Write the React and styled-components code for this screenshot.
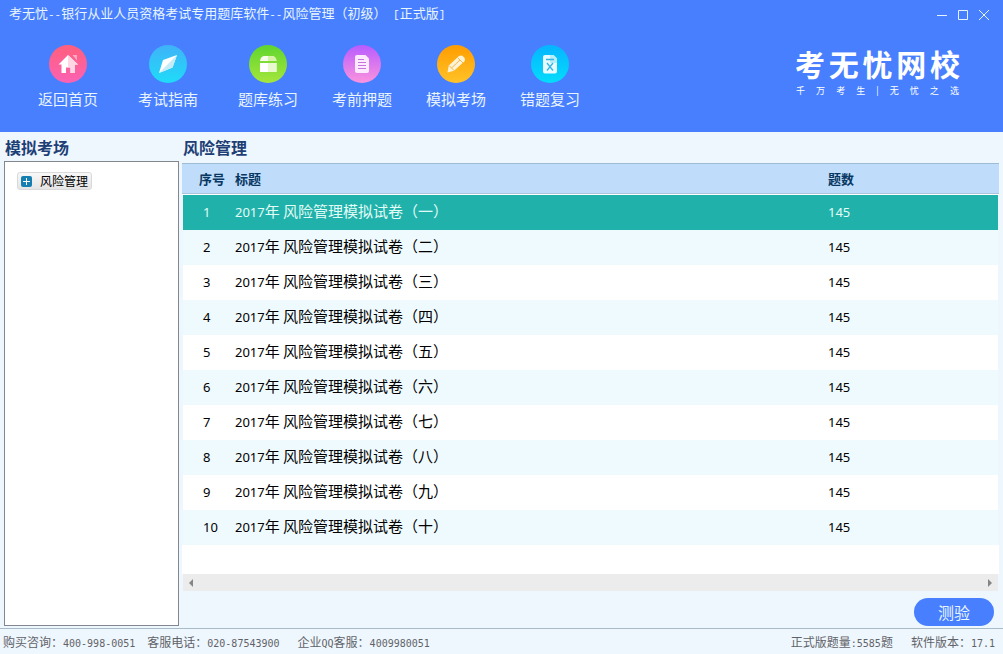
import React, { useState } from "react";
import styled, { createGlobalStyle } from "styled-components";

const navItems = [
  { key: "home", label: "返回首页", gap: 40 },
  { key: "guide", label: "考试指南", gap: 40 },
  { key: "bank", label: "题库练习", gap: 34 },
  { key: "predict", label: "考前押题", gap: 34 },
  { key: "mock", label: "模拟考场", gap: 34 },
  { key: "wrong", label: "错题复习", gap: 0 },
];

const papers = ["一", "二", "三", "四", "五", "六", "七", "八", "九", "十"].map(
  (num, index) => ({
    id: index + 1,
    year: "2017",
    name: `年 风险管理模拟试卷（${num}）`,
    count: 145,
  })
);

const brand = ["考", "无", "忧", "网", "校"];
const slogan = ["千", "万", "考", "生", "|", "无", "忧", "之", "选"];

const gradients = {
  home: ["#ff5f7c", "#fb62b4"],
  guide: ["#3fb2f8", "#1fdcf8"],
  bank: ["#5fd52f", "#a6e63c"],
  predict: ["#b75cff", "#fb93de"],
  mock: ["#ff9c00", "#ffc328"],
  wrong: ["#06b4ff", "#04dcfb"],
};

const shapes = {
  home: (
    <>
      <path d="M23.500 10H28v5.500z" fill="#ffa9c3" />
      <path d="M19 10L9.500 19.500h3V28H17v-5.500h4.500V28H26v-8.500h3z" fill="#fff" />
      <path d="M19 10v12.500h2.500V28H26v-8.500h3z" fill="#ffd6e3" />
    </>
  ),
  guide: (
    <>
      <path d="M28 10L14 15 10 28l13.500-5.500z" fill="#fff" />
      <path d="M28 10l-4.500 12.500L10 28z" fill="#c4ecf8" />
    </>
  ),
  bank: (
    <>
      <path d="M14.500 11h9.500q3 1 3.500 5H11q.5-4 3.500-5z" fill="#f6fdea" />
      <path d="M19 11h5q3 1 3.500 5H19z" fill="#d6f3a8" />
      <path d="M11 18h16.500v9H11z" fill="#fff" />
      <path d="M19 18h8.500v9H19z" fill="#e9f8cf" />
    </>
  ),
  predict: (
    <>
      <path d="M14 10h8.500l3.500 3.500V26q0 2-2 2H14q-2 0-2-2V12q0-2 2-2z" fill="#fdeaff" />
      <path d="M15 14.500h6M15 17.500h8M15 20.500h8M15 23.500h8" stroke="#c673dc" strokeWidth="1" />
    </>
  ),
  mock: (
    <>
      <path
        d="M10.500 27.500l1.300-7L21.500 11.500q2.500-2 5 .3t.8 4.700L17 25.800z"
        fill="#fff3d6"
      />
      <path d="M12 20.500l5 5M20.500 12.500l5.500 5.500M14.500 23l8.500-8" stroke="#f0b65a" strokeWidth="1" fill="none" />
    </>
  ),
  wrong: (
    <>
      <path d="M14 10h8.500l3.500 3.500V26.500q0 2-2 2H14q-2 0-2-2V12q0-2 2-2z" fill="#e7fbff" />
      <path d="M19 10h3.500l3.500 3.500V18h-7z" fill="#b5edfb" />
      <path d="M15 14.500h8M16 18l6 7.500M22 18l-6 7.500" stroke="#35b5e3" strokeWidth="1.300" fill="none" />
    </>
  ),
};

const NavIcon = ({ name }) => (
  <svg width="38" height="38" viewBox="0 0 38 38" aria-hidden="true">
    <defs>
      <linearGradient id={`nav-${name}`} x1="0" y1="0" x2="0" y2="1">
        <stop offset="0" stopColor={gradients[name][0]} />
        <stop offset="1" stopColor={gradients[name][1]} />
      </linearGradient>
    </defs>
    <circle cx="19" cy="19" r="19" fill={`url(#nav-${name})`} />
    {shapes[name]}
  </svg>
);

const App = () => {
  const [selected, setSelected] = useState(1);

  return (
    <>
      <GlobalStyle />
      <Page>
        <Header>
          <TitleBar>
            <Title>
              考无忧<Dash>--</Dash>银行从业人员资格考试专用题库软件
              <Dash>--</Dash>风险管理（初级）<Dash> [</Dash>正式版<Dash>]</Dash>
            </Title>
            <WindowButtons>
              <WindowButton aria-label="最小化">
                <svg width="12" height="12">
                  <path d="M1 6.500h10" stroke="#e4f4ff" />
                </svg>
              </WindowButton>
              <WindowButton aria-label="最大化">
                <svg width="12" height="12">
                  <path d="M1.500 1.500h9v9h-9z" stroke="#e4f4ff" fill="none" />
                </svg>
              </WindowButton>
              <WindowButton aria-label="关闭">
                <svg width="12" height="12">
                  <path d="M1 1l10 10M11 1L1 11" stroke="#e4f4ff" />
                </svg>
              </WindowButton>
            </WindowButtons>
          </TitleBar>
          <HeaderBody>
            <Nav>
              {navItems.map((item) => (
                <NavButton key={item.key} $gap={item.gap}>
                  <NavIcon name={item.key} />
                  <span>{item.label}</span>
                </NavButton>
              ))}
            </Nav>
            <Brand>
              <BrandName>
                {brand.map((char) => (
                  <span key={char}>{char}</span>
                ))}
              </BrandName>
              <Slogan>
                {slogan.map((char) => (
                  <span key={char}>{char}</span>
                ))}
              </Slogan>
            </Brand>
          </HeaderBody>
        </Header>

        <Main>
          <Sidebar>
            <PanelTitle>模拟考场</PanelTitle>
            <Tree>
              <TreeButton>
                <svg width="11" height="11" aria-hidden="true">
                  <rect width="11" height="11" rx="2" fill="#147fb0" />
                  <path d="M2 5.500h7M5.500 2v7" stroke="#fff" />
                </svg>
                风险管理
              </TreeButton>
            </Tree>
          </Sidebar>

          <Content>
            <PanelTitle>风险管理</PanelTitle>
            <TableWrap>
              <Table>
                <thead>
                  <tr>
                    <HeadCell $width="53px" $left={17}>
                      序号
                    </HeadCell>
                    <HeadCell>标题</HeadCell>
                    <HeadCell $width="171px">题数</HeadCell>
                  </tr>
                </thead>
                <tbody>
                  {papers.map((paper) => (
                    <TableRow
                      key={paper.id}
                      $active={paper.id === selected}
                      onClick={() => setSelected(paper.id)}
                    >
                      <Cell $left={20}>
                        <Digits>{paper.id}</Digits>
                      </Cell>
                      <Cell>
                        <Digits>{paper.year}</Digits>
                        {paper.name}
                      </Cell>
                      <Cell>
                        <Digits>{paper.count}</Digits>
                      </Cell>
                    </TableRow>
                  ))}
                </tbody>
              </Table>
            </TableWrap>
            <ScrollTrack>
              <ScrollButton aria-label="向左滚动">
                <svg width="6" height="8">
                  <path d="M5 0v8L1 4z" fill="#858585" />
                </svg>
              </ScrollButton>
              <ScrollButton aria-label="向右滚动">
                <svg width="6" height="8">
                  <path d="M1 0v8l4-4z" fill="#858585" />
                </svg>
              </ScrollButton>
            </ScrollTrack>
            <Actions>
              <TestButton>测验</TestButton>
            </Actions>
          </Content>
        </Main>

        <Footer>
          <FooterGroup $gap={12}>
            <span>
              购买咨询：<Mono>400-998-0051</Mono>
            </span>
            <span>
              客服电话：<Mono>020-87543900</Mono>
            </span>
          </FooterGroup>
          <FooterQQ>
            企业<Mono>QQ</Mono>客服：<Mono>4009980051</Mono>
          </FooterQQ>
          <FooterGroup $gap={18}>
            <span>
              正式版题量<Mono>:5585</Mono>题
            </span>
            <span>
              软件版本：<Mono>17.1</Mono>
            </span>
          </FooterGroup>
        </Footer>
      </Page>
    </>
  );
};

const GlobalStyle = createGlobalStyle`
  * {
    box-sizing: border-box;
  }

  body {
    margin: 0;
    font-family: "Noto Sans CJK SC", sans-serif;
  }

  button {
    padding: 0;
    border: 0;
    background: none;
    font-family: inherit;
    cursor: pointer;
  }

  svg {
    display: block;
  }
`;

const Page = styled.div`
  min-height: 100vh;
  display: flex;
  flex-direction: column;
  background: #eff7fe;
`;

const Header = styled.header`
  height: 132px;
  background: #477fff;
  color: #e9f6ff;
`;

const TitleBar = styled.div`
  height: 28px;
  display: flex;
  justify-content: space-between;
  align-items: center;
  padding: 0 13px 0 9px;
`;

const Title = styled.h1`
  margin: 0;
  font-size: 13px;
  line-height: 20px;
  font-weight: 400;
  white-space: nowrap;
`;

const Dash = styled.span`
  font-family: "Liberation Mono", monospace;
  font-size: 11px;
`;

const WindowButtons = styled.div`
  display: flex;
  gap: 9px;
  padding-top: 2px;
`;

const WindowButton = styled.button`
  width: 12px;
  height: 12px;
`;

const HeaderBody = styled.div`
  display: flex;
  justify-content: space-between;
  padding: 17px 43px 0 38px;
`;

const Nav = styled.nav`
  display: flex;
  align-items: flex-start;
`;

const NavButton = styled.button`
  width: 60px;
  margin-right: ${(props) => props.$gap}px;
  display: flex;
  flex-direction: column;
  align-items: center;
  gap: 5px;
  color: #e9f4ff;
  font-size: 15px;
  line-height: 22px;
  white-space: nowrap;
`;

const Brand = styled.div`
  width: 165px;
  display: flex;
  flex-direction: column;
  gap: 4px;
  color: #fff;
`;

const BrandName = styled.div`
  display: flex;
  justify-content: space-between;
  font-size: 30px;
  line-height: 36px;
  font-weight: 700;
`;

const Slogan = styled.div`
  display: flex;
  justify-content: space-between;
  padding: 0 1px;
  font-size: 9px;
  line-height: 12px;
`;

const Main = styled.main`
  flex: 1;
  display: flex;
  gap: 3px;
  padding: 0 4px 2px;
`;

const Sidebar = styled.aside`
  width: 175px;
  flex-shrink: 0;
  display: flex;
  flex-direction: column;
`;

const PanelTitle = styled.h2`
  margin: 0;
  padding: 3px 1px 2px;
  color: #1d3f75;
  font-size: 16px;
  line-height: 24px;
  font-weight: 700;
`;

const Tree = styled.div`
  flex: 1;
  padding: 10px 12px;
  border: 1px solid #828790;
  background: #fff;
`;

const TreeButton = styled.button`
  height: 18px;
  display: flex;
  align-items: center;
  gap: 8px;
  padding: 0 3px;
  border: 1px solid #d9d9d9;
  border-radius: 3px;
  background: linear-gradient(#f8f8f8, #e5e5e5);
  color: #000;
  font-size: 12px;
  line-height: 16px;
`;

const Content = styled.section`
  flex: 1;
  min-width: 0;
  display: flex;
  flex-direction: column;
`;

const TableWrap = styled.div`
  flex: 1;
  margin-top: 2px;
  background: #fff;
`;

const Table = styled.table`
  width: 100%;
  border-collapse: separate;
  border-spacing: 0;
  table-layout: fixed;
  text-align: left;

  thead::after {
    content: "";
    display: block;
    height: 1px;
  }
`;

const HeadCell = styled.th`
  width: ${(props) => props.$width || "auto"};
  height: 31px;
  padding: 0 0 0 ${(props) => props.$left || 0}px;
  border-top: 1px solid #9dbcd5;
  border-bottom: 1px solid #a9c5dc;
  background: #bfdcfa;
  color: #073763;
  font-size: 13px;
  line-height: 20px;
  font-weight: 700;
`;

const TableRow = styled.tr`
  background: ${(props) => (props.$active ? "#20b2aa" : "#fff")};
  color: ${(props) => (props.$active ? "#e3fbf7" : "#000")};
  cursor: pointer;

  &:nth-child(even) {
    background: ${(props) => (props.$active ? "#20b2aa" : "#effafe")};
  }
`;

const Cell = styled.td`
  height: 35px;
  padding: 0 0 2px ${(props) => props.$left || 0}px;
  font-size: 15px;
  line-height: 22px;
  white-space: nowrap;

  &:first-child {
    border-left: 1px solid #eff7fe;
  }

  &:last-child {
    border-right: 1px solid #eff7fe;
  }
`;

const Digits = styled.span`
  font-family: "Noto Sans", sans-serif;
  font-size: 13px;
`;

const ScrollTrack = styled.div`
  height: 17px;
  margin: 0 1px;
  display: flex;
  justify-content: space-between;
  align-items: center;
  padding: 0 4px;
  background: #ececec;
`;

const ScrollButton = styled.button`
  width: 8px;
  height: 15px;
  display: flex;
  align-items: center;
  justify-content: center;
`;

const Actions = styled.div`
  display: flex;
  justify-content: flex-end;
  padding: 7px 5px 0 0;
`;

const TestButton = styled.button`
  width: 80px;
  height: 28px;
  border-radius: 14px;
  background: #477fff;
  color: #e9f6ff;
  font-size: 16px;
  line-height: 24px;
`;

const Footer = styled.footer`
  height: 26px;
  display: flex;
  align-items: center;
  padding: 2px 8px 0 3px;
  border-top: 1px solid #a9bac8;
  color: #5f6368;
  font-size: 12px;
  line-height: 20px;
  white-space: nowrap;
`;

const FooterGroup = styled.div`
  display: flex;
  gap: ${(props) => props.$gap}px;
`;

const FooterQQ = styled.div`
  flex: 1;
  padding-left: 18px;
`;

const Mono = styled.span`
  font-family: "DejaVu Sans Mono", monospace;
  font-size: 10px;
`;

export default App;
